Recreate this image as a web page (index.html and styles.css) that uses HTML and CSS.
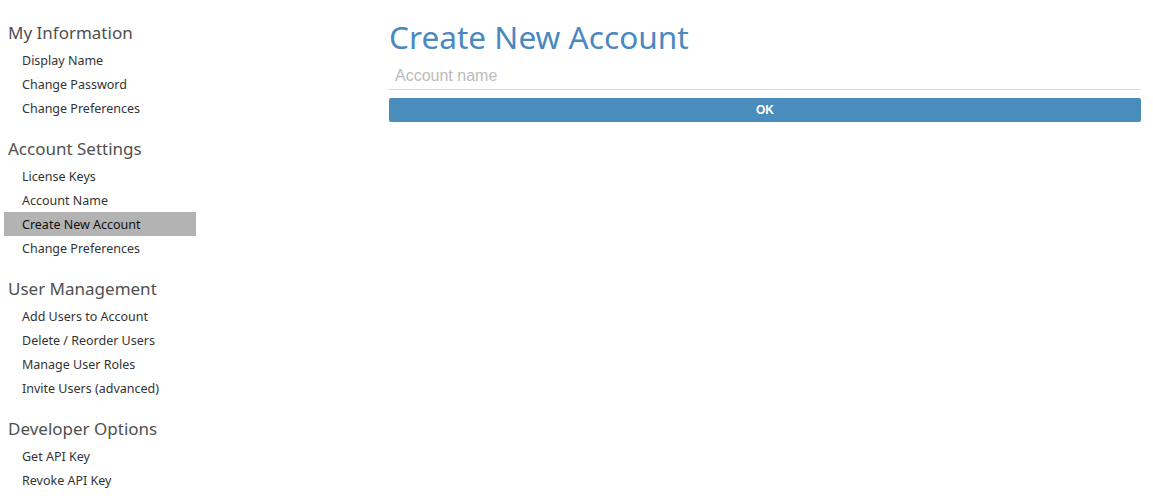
FILE: index.html
```html
<!DOCTYPE html>
<html>
<head>
<meta charset="utf-8">
<link rel="stylesheet" href="styles.css">
</head>
<body>
<div class="layout">
  <nav class="sidebar">
    <section class="group">
      <h2 class="group-title">My Information</h2>
      <a class="nav-link">Display Name</a>
      <a class="nav-link">Change Password</a>
      <a class="nav-link">Change Preferences</a>
    </section>
    <section class="group">
      <h2 class="group-title">Account Settings</h2>
      <a class="nav-link">License Keys</a>
      <a class="nav-link">Account Name</a>
      <a class="nav-link active">Create New Account</a>
      <a class="nav-link">Change Preferences</a>
    </section>
    <section class="group">
      <h2 class="group-title">User Management</h2>
      <a class="nav-link">Add Users to Account</a>
      <a class="nav-link">Delete / Reorder Users</a>
      <a class="nav-link">Manage User Roles</a>
      <a class="nav-link">Invite Users (advanced)</a>
    </section>
    <section class="group">
      <h2 class="group-title">Developer Options</h2>
      <a class="nav-link">Get API Key</a>
      <a class="nav-link">Revoke API Key</a>
    </section>
  </nav>
  <main class="content">
    <h1 class="page-title">Create New Account</h1>
    <input class="text-input" type="text" placeholder="Account name">
    <button class="btn-ok">OK</button>
  </main>
</div>
</body>
</html>
```
FILE: styles.css
```css
html, body {
  margin: 0;
  padding: 0;
  background: #fff;
}
body {
  font-family: "Noto Sans", "DejaVu Sans", sans-serif;
}
.layout {
  display: flex;
  align-items: flex-start;
}
.sidebar {
  width: 192px;
  margin-left: 4px;
  padding-top: 21px;
  display: flex;
  flex-direction: column;
}
.group {
  display: flex;
  flex-direction: column;
  margin-bottom: 17px;
}
.group-title {
  margin: 0 0 3px 0;
  padding-left: 4px;
  font-size: 17px;
  line-height: 24px;
  font-weight: normal;
  color: #505050;
}
.nav-link {
  display: block;
  padding-left: 18px;
  padding-top: 1px;
  height: 23px;
  line-height: 23px;
  font-size: 12.5px;
  color: #333;
  cursor: pointer;
}
.nav-link.active {
  background: #b3b3b3;
  color: #111;
}
.content {
  margin-left: 193px;
  width: 752px;
  display: flex;
  flex-direction: column;
}
.page-title {
  margin: 16px 0 0 0;
  font-size: 31.6px;
  line-height: 42px;
  font-weight: normal;
  color: #4a89bf;
}
.text-input {
  margin-top: 4px;
  border: none;
  border-bottom: 1px solid #dcdcdc;
  padding: 0 6px;
  height: 27px;
  font-family: "Liberation Sans", Arial, sans-serif;
  font-size: 16px;
  color: #333;
  outline: none;
}
.text-input::placeholder {
  color: #bbb;
}
.btn-ok {
  margin-top: 8px;
  height: 24px;
  border: none;
  border-radius: 2px;
  background: #4a8cbb;
  color: #fff;
  font-family: "Liberation Sans", Arial, sans-serif;
  font-weight: bold;
  font-size: 12px;
  padding: 0;
}
```
